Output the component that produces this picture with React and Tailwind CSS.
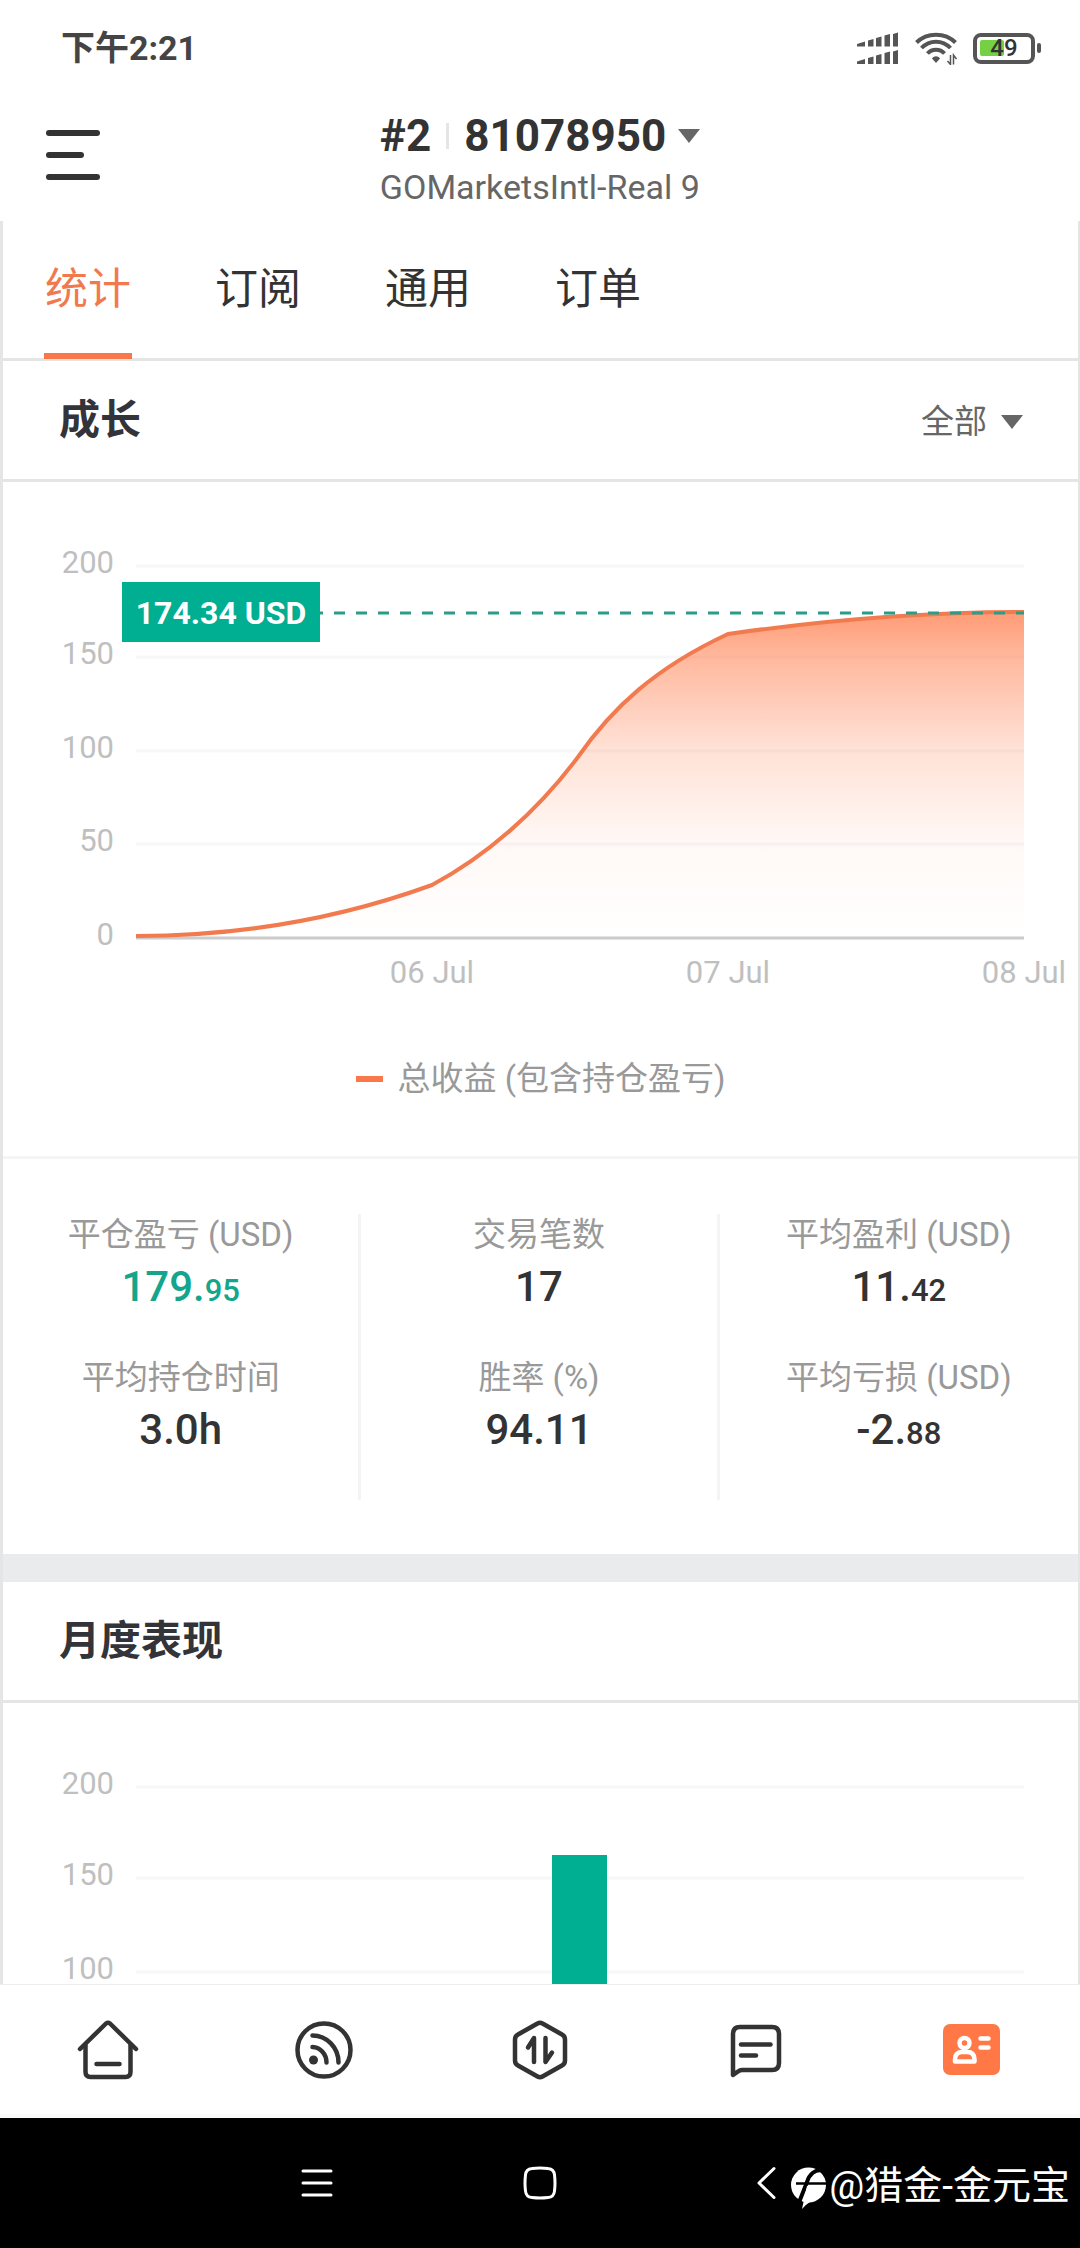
import React, { useState } from "react";

const TABS = ["统计", "订阅", "通用", "订单"];

const STATS = [
  [
    { label: "平仓盈亏 (USD)", value: "179.", small: "95", positive: true },
    { label: "平均持仓时间", value: "3.0h" },
  ],
  [
    { label: "交易笔数", value: "17" },
    { label: "胜率 (%)", value: "94.11" },
  ],
  [
    { label: "平均盈利 (USD)", value: "11.", small: "42" },
    { label: "平均亏损 (USD)", value: "-2.", small: "88" },
  ],
];

const GROWTH_TICKS = [
  { value: 200, y: 84 },
  { value: 150, y: 175 },
  { value: 100, y: 269 },
  { value: 50, y: 362 },
  { value: 0, y: 456 },
];

const GROWTH_DAYS = [
  { label: "06 Jul", x: 429 },
  { label: "07 Jul", x: 725 },
  { label: "08 Jul", x: 1021 },
];

const GROWTH_LINE =
  "M133 454C232 454 330 439 429 403C482 375 534 330 575 275C609 226 652 186 725 152C823 138 922 130 1021 130";

function StatusBar() {
  return (
    <div className="flex h-24 items-center justify-between pr-[39px] pl-[61px]">
      <span className="text-[34px] font-bold text-[#444]">下午2:21</span>
      <div className="flex items-center gap-4 text-[#555]">
        <svg width="42" height="32" viewBox="0 0 42 32" fill="currentColor" aria-hidden="true">
          <path d="M0 12l8-2.500v5H0zM11 8.500l5.500-1.500v7.500H11zM19 6l5.500-1.500v10H19zM27.500 3.500L33 2v12.500h-5.500zM36 2l5-1.500v14h-5z" />
          <path d="M0 29.500L8 27v5H0zM11 26l5.500-1.500V32H11zM19 23.500l5.500-1.500v10H19zM27.500 21l5.500-1.500V32h-5.500zM36 19.500l5-1.500v14h-5z" />
        </svg>
        <svg width="42" height="34" viewBox="0 0 42 34" fill="none" stroke="currentColor" strokeWidth="4" aria-hidden="true">
          <path d="M1.500 11.500C12 1 30 1 40.500 11.500" />
          <path d="M6.500 17C14.500 8.500 27.500 8.500 35.500 17" />
          <path d="M12.500 22.500C17 17.500 25 17.500 29.500 22.500" />
          <path d="M17 27.500c2-3 6-3 8 0L21 32z" fill="currentColor" stroke="none" />
          <path d="M35.500 24v9.500l-3-3.500M38.500 33.500V24l3 4" strokeWidth="1.500" />
        </svg>
        <div className="flex items-center gap-[2px]">
          <div className="relative flex h-[31px] w-[62px] items-center justify-center rounded-lg border-4 border-[#555]">
            <div className="absolute left-[3px] h-4 w-6 rounded-xs bg-[#76d043]" />
            <span className="relative text-[24px] leading-[24px] font-medium text-[#333]">49</span>
          </div>
          <div className="h-[10px] w-1 rounded-xs bg-[#555]" />
        </div>
      </div>
    </div>
  );
}

function Caret() {
  return (
    <svg width="22" height="14" viewBox="0 0 22 14" aria-hidden="true">
      <path d="M0 0h22L11 14z" fill="#666" />
    </svg>
  );
}

function Header() {
  return (
    <header className="grid h-[125px] grid-cols-[1fr_auto_1fr] items-center px-[46px]">
      <button type="button" aria-label="菜单" className="flex w-[54px] flex-col gap-4 pb-2">
        <span className="h-[6px] w-full rounded-full bg-[#333]" />
        <span className="h-[6px] w-[38px] rounded-full bg-[#333]" />
        <span className="h-[6px] w-full rounded-full bg-[#333]" />
      </button>
      <button type="button" className="flex flex-col items-start gap-[6px]">
        <span className="flex h-[50px] items-center text-[44px] font-bold text-[#333]">
          #2
          <span className="mx-[15px] h-[26px] w-[3px] bg-[#e5e5e5]" />
          <span className="mr-3">81078950</span>
          <Caret />
        </span>
        <span className="text-[34px] leading-[40px] text-[#666]">GOMarketsIntl-Real 9</span>
      </button>
    </header>
  );
}

function SectionTitle({ title, children }) {
  return (
    <div className="flex h-[121px] items-center justify-between border-b-3 border-[#e5e5e5] pr-[55px] pl-14">
      <h2 className="text-[41px] leading-[60px] font-bold text-[#333439]">{title}</h2>
      {children}
    </div>
  );
}

function GrowthChart() {
  return (
    <svg viewBox="0 0 1075 520" className="block w-full" role="img" aria-label="成长">
      <defs>
        <linearGradient id="growth" x1="0" y1="130" x2="0" y2="455" gradientUnits="userSpaceOnUse">
          <stop offset="0" stopColor="#ff7744" stopOpacity="0.74" />
          <stop offset="0.13" stopColor="#ff7744" stopOpacity="0.53" />
          <stop offset="0.42" stopColor="#ff7744" stopOpacity="0.22" />
          <stop offset="0.71" stopColor="#ff7744" stopOpacity="0.05" />
          <stop offset="1" stopColor="#ff7744" stopOpacity="0" />
        </linearGradient>
      </defs>
      {GROWTH_TICKS.map((tick) => (
        <g key={tick.value}>
          <path
            d={`M133 ${tick.y}H1021`}
            stroke={tick.value === 0 ? "#ccc" : "#f7f7f7"}
            strokeWidth="3"
          />
          <text x="111" y={tick.y + 7} textAnchor="end" className="fill-[#bfbfbf] text-[31px]">
            {tick.value}
          </text>
        </g>
      ))}
      <path d={`${GROWTH_LINE}V455H133Z`} fill="url(#growth)" />
      <path d={GROWTH_LINE} fill="none" stroke="#f27a4f" strokeWidth="4" />
      <path d="M309 131H1021" stroke="#2a9d88" strokeWidth="3" strokeDasharray="11 11" />
      <rect x="119" y="100" width="198" height="60" fill="#00ae92" />
      <text x="218" y="142" textAnchor="middle" className="fill-white text-[32px] font-bold">
        174.34 USD
      </text>
      {GROWTH_DAYS.map((day) => (
        <text key={day.label} x={day.x} y="501" textAnchor="middle" className="fill-[#bfbfbf] text-[31px]">
          {day.label}
        </text>
      ))}
    </svg>
  );
}

function MonthlyChart() {
  return (
    <svg viewBox="0 0 1075 281" className="block w-full shrink-0" role="img" aria-label="月度表现">
      {GROWTH_TICKS.slice(0, 3).map((tick) => (
        <g key={tick.value}>
          <path d={`M133 ${tick.y}H1021`} stroke="#f7f7f7" strokeWidth="3" />
          <text x="111" y={tick.y + 7} textAnchor="end" className="fill-[#bfbfbf] text-[31px]">
            {tick.value}
          </text>
        </g>
      ))}
      <rect x="549" y="152" width="55" height="129" fill="#00ae92" />
    </svg>
  );
}

function Stats() {
  return (
    <div className="grid grid-cols-3 border-t-3 border-[#f5f5f5] pt-[55px] pb-[54px] text-center">
      {STATS.map((column) => (
        <dl key={column[0].label} className="border-r-3 border-[#f3f5f5] last:border-r-0">
          {column.map((item) => (
            <div key={item.label} className="h-[143px]">
              <dt className="text-[33px] leading-[42px] text-[#999]">{item.label}</dt>
              <dd
                className={`text-[42px] leading-[62px] font-medium ${
                  item.positive ? "text-[#14a58c]" : "text-[#333]"
                }`}
              >
                {item.value}
                {item.small && <span className="text-[31px]">{item.small}</span>}
              </dd>
            </div>
          ))}
        </dl>
      ))}
    </div>
  );
}

function NavIcon({ children }) {
  return (
    <svg
      width="64"
      height="64"
      viewBox="0 0 64 64"
      fill="none"
      stroke="#333"
      strokeWidth="4.500"
      strokeLinecap="round"
      strokeLinejoin="round"
      aria-hidden="true"
    >
      {children}
    </svg>
  );
}

function BottomNav() {
  return (
    <nav className="grid h-[134px] grid-cols-5 border-t border-b-4 border-t-[#eee] border-b-[#fafafa] *:flex *:items-center *:justify-center">
      <a href="#home" aria-label="首页">
        <NavIcon>
          <path d="M4 31L30 5.500q2-1.500 4 0L60 31" />
          <path d="M9.500 27v27q0 5 5 5h35q5 0 5-5V27" />
          <path d="M20.500 46h23" />
        </NavIcon>
      </a>
      <a href="#feed" aria-label="动态">
        <NavIcon>
          <circle cx="32" cy="32" r="26.500" />
          <path d="M20.500 17.500A26 27 0 0 1 46.500 44.500" />
          <path d="M20.500 29A14.500 15.500 0 0 1 34.500 44.500" />
          <circle cx="21.500" cy="42" r="4.500" fill="#333" stroke="none" />
        </NavIcon>
      </a>
      <a href="#trade" aria-label="交易">
        <NavIcon>
          <path d="M29.500 5.500q2.500-1.500 5 0L54 16.500q3 1.500 3 5v21q0 3.500-3 5L34.500 58.500q-2.500 1.500-5 0L10 47.500q-3-1.500-3-5v-21q0-3.500 3-5z" />
          <path d="M20 29.500L26 20v24" />
          <path d="M44 34.500L37.500 44V20" />
        </NavIcon>
      </a>
      <a href="#messages" aria-label="消息">
        <NavIcon>
          <path d="M9 56V16q0-7 7-7h32q7 0 7 7v29q0 7-7 7H18q-2 0-4 1.500L9 57z" />
          <path d="M17 26.500h29.500" />
          <path d="M17 37.500h15" />
        </NavIcon>
      </a>
      <a href="#account" aria-label="账户" aria-current="page">
        <NavIcon>
          <rect x="3" y="6" width="57" height="51" rx="7" fill="#ff7846" stroke="none" />
          <g stroke="#fff">
            <circle cx="24.500" cy="25" r="5" />
            <path d="M15 43.500v-2q0-7.500 7.500-7.500h4.500q7.500 0 7.500 7.500v2z" />
            <path d="M40.500 20.500h8M40.500 29.500h8" />
          </g>
        </NavIcon>
      </a>
    </nav>
  );
}

function SystemBar() {
  return (
    <div className="relative flex h-[130px] justify-center bg-black">
      <div className="grid w-[62%] grid-cols-3 *:flex *:items-center *:justify-center">
        <button type="button" aria-label="最近任务">
          <svg width="32" height="32" viewBox="0 0 32 32" stroke="#fff" strokeWidth="3" strokeLinecap="round">
            <path d="M2 4h28M2 16h28M2 28h28" />
          </svg>
        </button>
        <button type="button" aria-label="主屏幕">
          <svg width="34" height="34" viewBox="0 0 34 34" fill="none" stroke="#fff" strokeWidth="3">
            <path d="M9 2.500Q17 1.500 25 2.500Q31 3 31.500 9Q32.500 17 31.500 25Q31 31 25 31.500Q17 32.500 9 31.500Q3 31 2.500 25Q1.500 17 2.500 9Q3 3 9 2.500z" />
          </svg>
        </button>
        <button type="button" aria-label="返回">
          <svg width="26" height="34" viewBox="0 0 26 34" fill="none" stroke="#fff" strokeWidth="3" strokeLinecap="round" strokeLinejoin="round">
            <path d="M24 2.500L9 17L24 31.500" />
          </svg>
        </button>
      </div>
      <div className="absolute top-[45px] right-[10px] flex items-center gap-[2px] text-white">
        <svg width="36" height="42" viewBox="0 0 36 42" className="mt-1" aria-hidden="true">
          <circle cx="17.500" cy="18" r="17.500" fill="#fff" />
          <path d="M33 4C24 1 18 8 16 15L7 38" fill="none" stroke="#000" strokeWidth="4" />
          <path d="M5 16.500h31" stroke="#000" strokeWidth="2.500" />
          <path d="M16 19L11 42q3-4 8-7l5-16z" fill="#fff" />
        </svg>
        <span className="text-[39px] leading-[40px]">@猎金-金元宝</span>
      </div>
    </div>
  );
}

export default function App() {
  const [tab, setTab] = useState("统计");

  return (
    <div className="flex h-screen flex-col bg-white font-[Roboto,'Noto_Sans_CJK_SC',sans-serif]">
      <StatusBar />
      <Header />
      <main className="min-h-0 flex-1 overflow-hidden border-r-2 border-l-3 border-[#e5e5e5]">
        <div role="tablist" className="flex h-[140px] gap-[82px] border-b-3 border-[#e5e5e5] pl-[41px]">
          {TABS.map((name) => (
            <button
              key={name}
              type="button"
              role="tab"
              aria-selected={tab === name}
              onClick={() => setTab(name)}
              className={`-mb-px border-b-6 px-px pt-1 text-[43px] ${
                tab === name
                  ? "border-[#f97748] text-[#f07a4e]"
                  : "border-transparent text-[#333]"
              }`}
            >
              {name}
            </button>
          ))}
        </div>

        <section>
          <SectionTitle title="成长">
            <label className="flex items-center gap-[14px] pt-1">
              <select aria-label="时间范围" className="appearance-none bg-transparent text-[33px] text-[#666]">
                <option>全部</option>
              </select>
              <Caret />
            </label>
          </SectionTitle>
          <GrowthChart />
          <div className="flex h-[154px] items-center justify-center gap-[15px]">
            <span className="h-[6px] w-[27px] bg-[#f97748]" />
            <span className="text-[33px] text-[#999]">总收益 (包含持仓盈亏)</span>
          </div>
          <Stats />
        </section>

        <section className="border-t-28 border-[#eaebec]">
          <SectionTitle title="月度表现" />
          <MonthlyChart />
        </section>
      </main>
      <BottomNav />
      <SystemBar />
    </div>
  );
}
